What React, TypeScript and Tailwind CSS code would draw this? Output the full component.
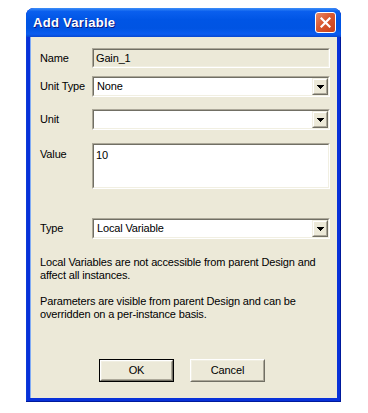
import React from "react";

const font = { fontFamily: '"Liberation Sans", Arial, sans-serif' };

function Sunken({ className = "", bg = "bg-white", children }: { className?: string; bg?: string; children?: React.ReactNode }) {
  return (
    <div className={`border border-t-[#ACA899] border-l-[#ACA899] border-r-white border-b-white ${className}`}>
      <div className={`h-full border border-t-[#716F64] border-l-[#716F64] border-r-[#F1EFE2] border-b-[#F1EFE2] ${bg}`}>
        {children}
      </div>
    </div>
  );
}

function Arrow() {
  return (
    <div className="w-[16px] h-full bg-[#ECE9D8] border border-t-[#F1EFE2] border-l-[#F1EFE2] border-r-[#716F64] border-b-[#716F64]">
      <div className="h-full border border-t-white border-l-white border-r-[#ACA899] border-b-[#ACA899] flex items-center justify-center">
        <svg width="7" height="4" viewBox="0 0 7 4" shapeRendering="crispEdges">
          <path d="M0 0h7v1H0zM1 1h5v1H1zM2 2h3v1H2zM3 3h1v1H3z" fill="#000" />
        </svg>
      </div>
    </div>
  );
}

function Combo({ value }: { value: string }) {
  return (
    <Sunken className="w-[238px] h-[21px]">
      <div className="flex h-full items-center">
        <span className="flex-1 pl-[3px] text-[11px] text-black leading-none">{value}</span>
        <Arrow />
      </div>
    </Sunken>
  );
}

function Button({ label, def = false }: { label: string; def?: boolean }) {
  const inner = (
    <div className="h-full border border-t-white border-l-white border-r-[#716F64] border-b-[#716F64]">
      <div className="h-full border border-t-[#F1EFE2] border-l-[#F1EFE2] border-r-[#ACA899] border-b-[#ACA899] flex items-center justify-center text-[11px] text-black">
        {label}
      </div>
    </div>
  );
  return (
    <div className={`w-[75px] h-[23px] bg-[#ECE9D8] ${def ? "border border-black" : ""}`}>{inner}</div>
  );
}

export default function App() {
  return (
    <div className="w-[368px] h-[413px] bg-white pt-[8px] pl-[26px] tracking-[-0.15px]" style={font}>
      <div className="w-[315px] h-[394px] rounded-t-[8px] bg-[#0831d9] flex flex-col shadow-[inset_-1px_-1px_0_#001a9c,inset_1px_0_0_#0b3cd8]">
        <div className="h-[29px] rounded-t-[8px] bg-[linear-gradient(to_bottom,#3d8ef8_0%,#0a5fee_12%,#0055e5_40%,#0054e3_70%,#0a5cf0_90%,#0847d0_100%)] flex items-center pl-[7px] pr-[5px]">
          <span className="flex-1 text-white text-[13px] font-bold tracking-[0.3px] [text-shadow:1px_1px_0_#0a1883]">
            Add Variable
          </span>
          <div className="w-[21px] h-[21px] rounded-[3px] border border-white bg-[linear-gradient(135deg,#e88a6b_0%,#d9582f_45%,#c8401a_100%)] flex items-center justify-center">
            <svg width="11" height="11" viewBox="0 0 11 11">
              <path d="M1.5 1.5L9.5 9.5M9.5 1.5L1.5 9.5" stroke="#fff" strokeWidth="2.2" strokeLinecap="square" />
            </svg>
          </div>
        </div>
        <div className="flex-1 mx-[4px] mb-[4px] bg-[#ECE9D8] shadow-[inset_1px_0_0_#7faaf5] pl-[10px] pt-[11px] text-[11px] text-black">
          <div className="flex items-center h-[20px]">
            <span className="w-[52px]">Name</span>
            <Sunken className="w-[238px] h-[20px]" bg="bg-[#ECE9D8]">
              <div className="h-full flex items-center pl-[2px] leading-none">Gain_1</div>
            </Sunken>
          </div>
          <div className="flex items-center mt-[8px]">
            <span className="w-[52px]">Unit Type</span>
            <Combo value="None" />
          </div>
          <div className="flex items-center mt-[12px]">
            <span className="w-[52px]">Unit</span>
            <Combo value="" />
          </div>
          <div className="flex mt-[13px]">
            <span className="w-[52px] pt-[3px]">Value</span>
            <Sunken className="w-[238px] h-[46px]">
              <div className="pl-[2px] pt-[2px]">10</div>
            </Sunken>
          </div>
          <div className="flex items-center mt-[29px]">
            <span className="w-[52px]">Type</span>
            <Combo value="Local Variable" />
          </div>
          <p className="mt-[17px] leading-[13px] w-[290px]">
            Local Variables are not accessible from parent Design and affect all instances.
          </p>
          <p className="mt-[13px] leading-[13px] w-[280px]">
            Parameters are visible from parent Design and can be overridden on a per-instance basis.
          </p>
          <div className="flex mt-[38px] pl-[59px] gap-[16px]">
            <Button label="OK" def />
            <Button label="Cancel" />
          </div>
        </div>
      </div>
    </div>
  );
}
